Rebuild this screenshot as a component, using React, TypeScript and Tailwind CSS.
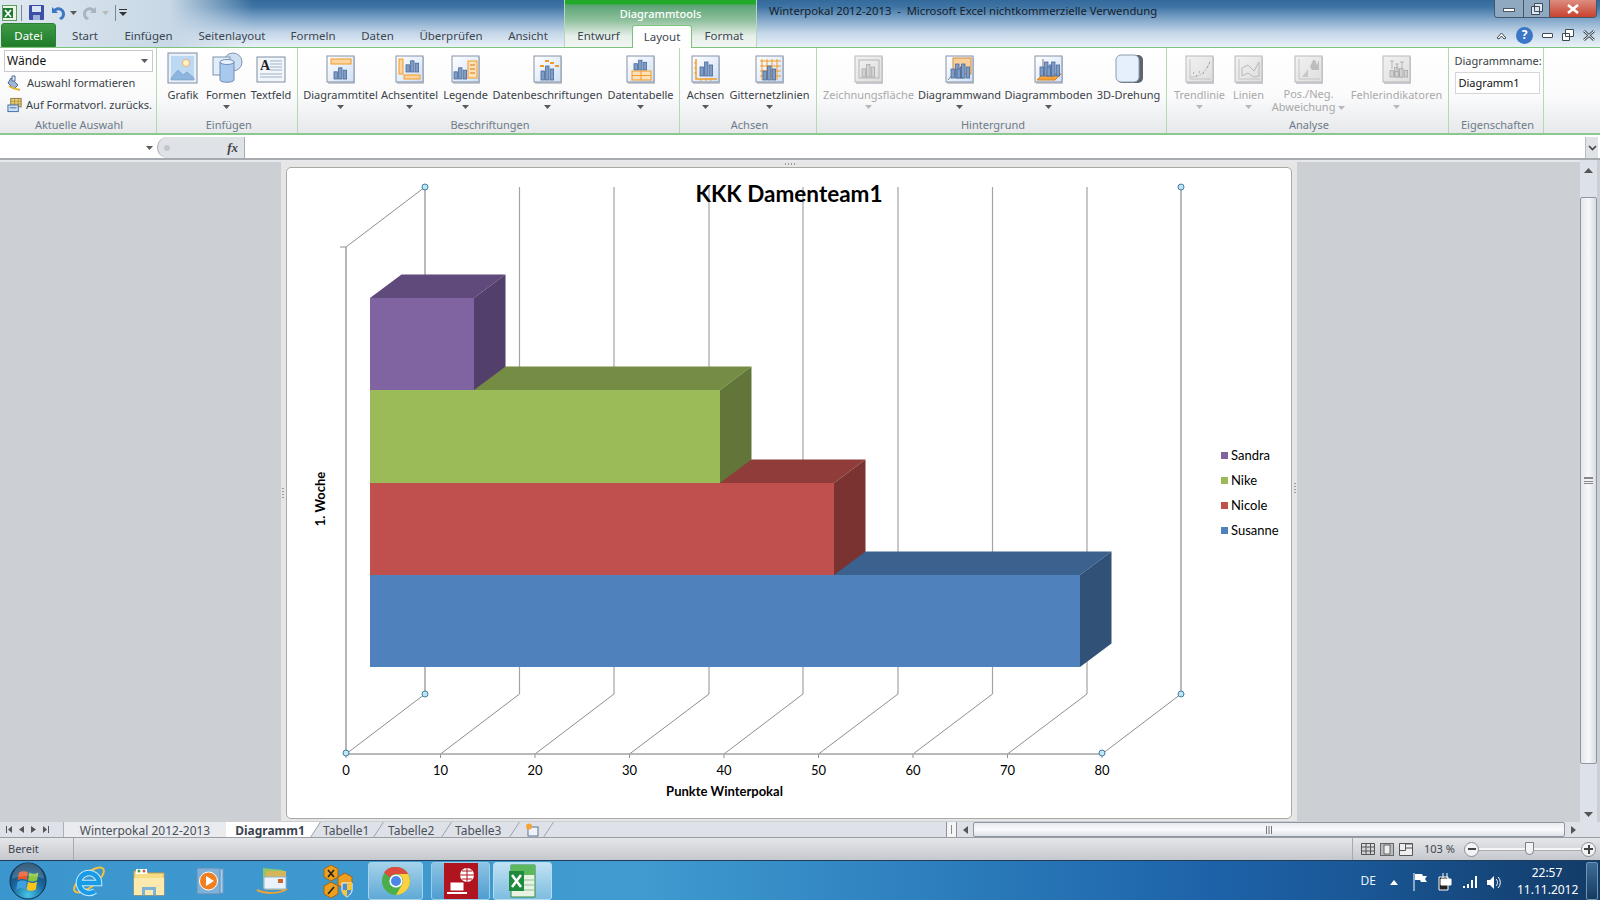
import React from 'react';

const UI = "font-['Noto_Sans','Open_Sans',sans-serif]";

const Arrow = ({ gray }: { gray?: boolean }) => (
  <svg width="7" height="4" viewBox="0 0 7 4"><path d="M0 0h7L3.5 4z" fill={gray ? '#b8b8b8' : '#5a5a5a'} /></svg>
);

const Frame = ({ gray, children }: { gray?: boolean; children?: React.ReactNode }) => (
  <svg width="30" height="29" viewBox="0 0 30 29">
    <rect x="2" y="2" width="27" height="27" fill="#c8ccd2" />
    <rect x="1" y="1" width="27" height="26" fill={gray ? 'url(#grayBox)' : 'url(#blueBox)'} stroke={gray ? '#b9b9b9' : '#8592a5'} />
    {children}
  </svg>
);

const Bars = ({ x = 8, y = 24, gray, s = 1 }: { x?: number; y?: number; gray?: boolean; s?: number }) => {
  const fill = gray ? '#d2d2d2' : '#7d9cc8';
  const stroke = gray ? '#a9a9a9' : '#4c6a96';
  return (
    <g fill={fill} stroke={stroke} strokeWidth="0.8">
      <rect x={x} y={y - 9 * s} width="3.4" height={9 * s} />
      <rect x={x + 4.6} y={y - 14 * s} width="3.4" height={14 * s} />
      <rect x={x + 9.2} y={y - 11 * s} width="3.4" height={11 * s} />
    </g>
  );
};

const OR = '#f39a26';

const Icons: Record<string, React.ReactNode> = {
  grafik: (
    <svg width="32" height="32" viewBox="0 0 32 32">
      <rect x="1" y="1" width="29" height="30" fill="#e9f0f8" stroke="#7f8ea3" />
      <rect x="4" y="4" width="23" height="24" fill="#bcd8f3" />
      <circle cx="19" cy="11" r="3.5" fill="#fff3c9" stroke="#f3b069" />
      <path d="M4 26l7-8 5 5 4-3 7 6v2H4z" fill="#8db5de" stroke="#6f97c3" strokeWidth=".6" />
    </svg>
  ),
  formen: (
    <svg width="32" height="32" viewBox="0 0 32 32" className="ml-[3px]">
      <circle cx="21" cy="10" r="9" fill="#cfdff3" stroke="#7f93ad" />
      <rect x="1" y="5" width="17" height="18" fill="#e4eefa" stroke="#7f93ad" />
      <path d="M8 10v18c0 3 14 3 14 0V10z" fill="#a9c8ee" stroke="#6d8db5" />
      <ellipse cx="15" cy="10" rx="7" ry="2.5" fill="#e8f2fd" stroke="#6d8db5" />
    </svg>
  ),
  text: (
    <svg width="30" height="29" viewBox="0 0 30 29">
      <rect x="1" y="2" width="28" height="25" fill="#f2f5fa" stroke="#7f8ea3" />
      <text x="4" y="15" fontSize="14" fontWeight="700" fontFamily="Liberation Serif, serif" fill="#222">A</text>
      <g stroke="#9fb1c8"><path d="M14 6h12M14 9h12M14 12h12M14 15h12M4 19h22M4 22h22" /></g>
    </svg>
  ),
  titel: <Frame><rect x="5" y="4" width="20" height="5" fill="#fbd6a0" stroke={OR} /><Bars x={8} y={24} s={0.8} /></Frame>,
  achsentitel: <Frame><rect x="4" y="4" width="4" height="15" fill="#fbd6a0" stroke={OR} /><rect x="9" y="20" width="16" height="4" fill="#fbd6a0" stroke={OR} /><Bars x={11} y={17} s={0.8} /></Frame>,
  legende: <Frame><Bars x={3} y={24} s={0.8} /><rect x="17" y="6" width="9" height="17" fill="#fde2b8" stroke={OR} /><path d="M19 10h5M19 14h5M19 18h5" stroke="#d9731a" /></Frame>,
  daten: <Frame><Bars x={8} y={25} /><path d="M7 11h4M12 6h4M17 8h4M22 11h4" stroke={OR} strokeWidth="2" /></Frame>,
  tabelle: <Frame><Bars x={8} y={15} s={0.7} /><rect x="6" y="16" width="19" height="9" fill="#fde2b8" stroke={OR} /><path d="M6 20.5h19M15 16v9" stroke={OR} /></Frame>,
  achsen: <Frame><Bars x={9} y={21} /><path d="M5 4v20h21" fill="none" stroke={OR} strokeWidth="1.5" /><path d="M3 8h2M3 13h2M3 18h2M10 24v2M15 24v2M20 24v2" stroke={OR} /></Frame>,
  gitter: <Frame><path d="M5 6h21M5 11h21M5 16h21M5 21h21M7 4v21M12 4v21M17 4v21M22 4v21" stroke={OR} /><Bars x={8} y={25} /></Frame>,
  flaeche: <Frame gray><rect x="5" y="5" width="20" height="18" fill="none" stroke="#b5b5b5" /><Bars x={8} y={22} gray s={0.9} /></Frame>,
  wand: <Frame><rect x="8" y="3" width="18" height="16" fill="#f8d09c" stroke="#d58d3f" /><path d="M8 19l-5 6" stroke="#888" /><Bars x={6} y={23} /><Bars x={12} y={23} /></Frame>,
  boden: <Frame><path d="M3 25l6-6h18l-6 6z" fill="#f5a43c" stroke="#d9801e" /><path d="M9 4v15" stroke="#777" /><Bars x={6} y={21} /><Bars x={13} y={21} /></Frame>,
  drehung: (
    <svg width="30" height="30" viewBox="0 0 30 30">
      <rect x="3" y="1" width="26" height="28" rx="5" fill="#5b6470" />
      <rect x="2" y="1" width="23" height="27" rx="5" fill="#e6effc" stroke="#8d9cb0" />
    </svg>
  ),
  trend: <Frame gray><path d="M5 4v20h21" fill="none" stroke="#c4c4c4" /><path d="M5 22c10 0 16-4 20-16" fill="none" stroke="#c8c8c8" /><path d="M8 18h1M11 21h1M14 17h1M18 18h1M22 12h1M24 8h1" stroke="#888" /></Frame>,
  linien: <Frame gray><path d="M5 4v20h21" fill="none" stroke="#c4c4c4" /><path d="M8 13l6-3 6 6 5-9v14l-5 1-6-4-6 3z" fill="none" stroke="#b8b8b8" /></Frame>,
  posneg: <Frame gray><path d="M5 4v20h21" fill="none" stroke="#c4c4c4" /><path d="M8 22l6-8v8z" fill="#c8c8c8" /><path d="M16 12l3-7h2l2 5 2-5v10h-7z" fill="#bdbdbd" /></Frame>,
  fehler: <Frame gray><Bars x={8} y={22} gray s={0.7} /><Bars x={13} y={22} gray s={0.6} /><path d="M10 6v8M8 6h4M15 9v6M13 9h4M20 7v8M18 7h4" stroke="#b4b4b4" /></Frame>,
};

type Btn = { w: number; label: string; icon: string; arrow?: boolean; off?: boolean };

const RibbonButton = ({ w, label, icon, arrow, off }: Btn) => (
  <div className="flex shrink-0 flex-col items-center" style={{ width: w }}>
    <div className="flex h-[33px] items-end justify-center">{Icons[icon]}</div>
    <div className={`mt-[3px] whitespace-nowrap text-[11px] leading-[15px] ${off ? 'text-[#a9a9a9]' : 'text-[#3a3f46]'}`}>{label}</div>
    {arrow && <div className="mt-[3px] flex h-[4px] items-center"><Arrow gray={off} /></div>}
  </div>
);

const Group = ({ w, pl, label, children }: { w: number; pl?: number; label: string; children: React.ReactNode }) => (
  <div className="flex h-full shrink-0 flex-col border-r border-[#b3d8b3]" style={{ width: w }}>
    <div className="flex h-[69px] pt-[3px]" style={{ paddingLeft: pl }}>{children}</div>
    <div className="pl-[4px] text-center text-[11px] leading-[15px] text-[#6f7b88]">{label}</div>
  </div>
);

const Tab = ({ w, label }: { w: number; label: string }) => (
  <div className="flex h-full shrink-0 items-center justify-center text-[11.5px] text-[#3d4650]" style={{ width: w }}>{label}</div>
);

const Slant = ({ white }: { white?: boolean }) => (
  <svg width="11" height="16" viewBox="0 0 11 16" className="shrink-0">
    {white && <path d="M0 0h10L0 16z" fill="#fff" />}
    <path d="M0 16L10.500 0" stroke="#9ea3aa" fill="none" />
  </svg>
);

const Grip = () => <div className="h-[2px] w-[10px] bg-[linear-gradient(90deg,#9a9a9a_1px,transparent_1px,transparent_2px)] bg-[length:3px_2px]" />;

const Chart = () => {
  const back = [425, 519.5, 614, 709, 803, 898, 992.5, 1087, 1181];
  const front = [346, 440.5, 535, 629.5, 724, 818.5, 913, 1007.5, 1102];
  const labels = [0, 10, 20, 30, 40, 50, 60, 70, 80];
  const series = [
    { name: 'Sandra', y: 298, h: 92, right: 474, c: '#8064a2', top: '#604a7b', side: '#533f6b' },
    { name: 'Nike', y: 390, h: 93, right: 720, c: '#9bbb59', top: '#748c43', side: '#62763a' },
    { name: 'Nicole', y: 483, h: 92, right: 834, c: '#c0504d', top: '#903c3a', side: '#7b3331' },
    { name: 'Susanne', y: 575, h: 92, right: 1080, c: '#4f81bd', top: '#3b618e', side: '#325177' },
  ];
  const handles = [[425, 187], [1181, 187], [425, 694], [1181, 694], [346, 753], [1102, 753]];
  return (
    <svg viewBox="287 168 1005 650" width="1005" height="650" className="block font-['Lato',sans-serif]">
      {back.map((x, i) => (
        <g key={x}>
          <path d={`M${x} 187V694`} stroke="#a3a3a3" strokeWidth={i === 0 || i === 8 ? 1.5 : 1.2} fill="none" />
          <path d={`M${x} 694L${front[i]} 754`} stroke="#8f8f8f" fill="none" />
          <path d={`M${front[i]} 754v4`} stroke="#8f8f8f" />
          <text x={front[i]} y="775" textAnchor="middle" fontSize="13" fill="#000">{labels[i]}</text>
        </g>
      ))}
      <path d="M346 247L425 187M340 247H346" stroke="#8f8f8f" fill="none" />
      <path d="M346 247V754H1102" stroke="#a3a3a3" strokeWidth="1.6" fill="none" />
      {[...series].reverse().map((s) => (
        <g key={s.name}>
          <path d={`M370 ${s.y}l31.5 -23.5H${s.right + 31.5}L${s.right} ${s.y}z`} fill={s.top} />
          <path d={`M${s.right} ${s.y}l31.5 -23.5v${s.h}L${s.right} ${s.y + s.h}z`} fill={s.side} />
          <rect x="370" y={s.y} width={s.right - 370} height={s.h} fill={s.c} />
        </g>
      ))}
      {handles.map(([x, y]) => (
        <circle key={`${x}-${y}`} cx={x} cy={y} r="3" fill="#bfe5f3" stroke="#3f7fa6" />
      ))}
      <text x="789" y="202" textAnchor="middle" fontSize="22.5" fontWeight="700" fill="#000">KKK Damenteam1</text>
      <text x="724.5" y="796" textAnchor="middle" fontSize="13" fontWeight="700" fill="#000">Punkte Winterpokal</text>
      <text transform="translate(325 499) rotate(-90)" textAnchor="middle" fontSize="13" fontWeight="700" fill="#000">1. Woche</text>
      {series.map((s, i) => (
        <g key={s.name}>
          <rect x="1221" y={452 + i * 25} width="7" height="7" fill={s.c} />
          <text x="1231" y={460 + i * 25} fontSize="13" fill="#000">{s.name}</text>
        </g>
      ))}
    </svg>
  );
};

const Chrome = () => (
  <svg width="30" height="30" viewBox="0 0 30 30">
    <circle cx="15" cy="15" r="14" fill="#4aae4c" />
    <path d="M15 1a14 14 0 0 1 12.1 7H15a7 7 0 0 0-6.1 3.5L3 6.3A14 14 0 0 1 15 1z" fill="#dd4b3e" />
    <path d="M27.1 8A14 14 0 0 1 15 29l6.1-10.5A7 7 0 0 0 15 8z" fill="#fcd13f" />
    <circle cx="15" cy="15" r="6.6" fill="#fff" />
    <circle cx="15" cy="15" r="5" fill="#4a85e8" />
  </svg>
);

const Taskbar = () => (
  <div className="flex h-[40px] shrink-0 items-center border-t border-[#1e3d5c] bg-[linear-gradient(90deg,#3a96cc_0%,#3f9bd0_40%,#2b7cbb_60%,#1d62a8_76%,#1a5796_85%,#123a66_100%)]">
    <div className="ml-[9px] flex h-[36px] w-[38px] shrink-0 items-center justify-center">
      <svg width="38" height="38" viewBox="0 0 38 38">
        <defs>
          <radialGradient id="orb" cx="0.5" cy="0.9" r="0.9">
            <stop offset="0" stopColor="#47c6e6" />
            <stop offset="0.5" stopColor="#1a6aa0" />
            <stop offset="1" stopColor="#12385c" />
          </radialGradient>
        </defs>
        <circle cx="19" cy="19" r="18" fill="url(#orb)" stroke="#0d2f4d" />
        <g transform="translate(19 19) scale(1.300) translate(-18 -18.500)">
          <path d="M11 12c3-1.500 5-1 7 0l-1 6c-2-1-4-1.500-7 0z" fill="#e8562a" />
          <path d="M19 12c2 1 4 1.500 7 0l-1 6c-3 1.500-5 1-7 0z" fill="#8cc63f" />
          <path d="M10 19c3-1.500 5-1 7 0l-1 6c-2-1-4-1.500-7 0z" fill="#3f9fe0" />
          <path d="M18 19c2 1 4 1.500 7 0l-1 6c-3 1.500-5 1-7 0z" fill="#fcc419" />
        </g>
        <path d="M3 17a16 16 0 0 1 32 0c-8-4-24-4-32 0z" fill="#fff" opacity=".18" />
      </svg>
    </div>
    <div className="ml-[24px] flex w-[36px] shrink-0 justify-center">
      <svg width="34" height="36" viewBox="0 0 34 36">
        <ellipse cx="17" cy="17" rx="18" ry="7" transform="rotate(-38 17 17)" fill="none" stroke="#f6c13a" strokeWidth="2" />
        <path d="M8 20h19a10 10 0 1 0-4 8" fill="none" stroke="#c5ecfb" strokeWidth="6.500" />
        <path d="M8 20h19a10 10 0 1 0-4 8" fill="none" stroke="#1b9be6" strokeWidth="4.500" />
      </svg>
    </div>
    <div className="ml-[24px] flex w-[36px] shrink-0 justify-center">
      <svg width="32" height="30" viewBox="0 0 32 30">
        <path d="M1 5h12l2 2h16v22H1z" fill="#f6dc85" stroke="#c7a14c" />
        <path d="M3 3h11v5H3z" fill="#fff" />
        <circle cx="6" cy="5" r="1.500" fill="#3fa34d" />
        <circle cx="11" cy="5" r="1.500" fill="#d9534f" />
        <path d="M1 12h30v17H1z" fill="#fbe9ad" />
        <path d="M9 29v-8h14v8h-3v-5h-8v5z" fill="#7fb2d9" />
      </svg>
    </div>
    <div className="ml-[25px] flex w-[36px] shrink-0 justify-center">
      <svg width="28" height="28" viewBox="0 0 28 28">
        <rect x="4" y="2" width="23" height="24" fill="#a9cbe6" stroke="#6f9dc4" />
        <rect x="1" y="1" width="23" height="26" fill="#7fb0d8" stroke="#5f8fb8" />
        <circle cx="12.500" cy="14" r="9" fill="#f0801f" stroke="#fff" />
        <path d="M10 9l8 5-8 5z" fill="#fff" />
      </svg>
    </div>
    <div className="ml-[27px] flex w-[36px] shrink-0 justify-center">
      <svg width="34" height="30" viewBox="0 0 34 30">
        <path d="M7 2l20 2v20L7 22z" fill="#8cc76a" />
        <path d="M10 5h20v19H10z" fill="#d6b45a" />
        <rect x="8" y="11" width="22" height="12" fill="#eaf3fb" stroke="#8fb4d4" />
        <rect x="22" y="13" width="5" height="4" fill="#c9652e" />
        <path d="M1 24c8 4 22 4 30-1" fill="none" stroke="#e8a33a" strokeWidth="2" />
      </svg>
    </div>
    <div className="ml-[29px] flex w-[36px] shrink-0 justify-center">
      <svg width="32" height="34" viewBox="0 0 32 34">
        <g fill="#eda01f" stroke="#a8660c">
          <path d="M9 1l7 4v8l-7 4-7-4V5z" />
          <path d="M23 9l7 4v8l-7 4-7-4v-8z" />
          <path d="M9 18l7 4v8l-7 4-7-4v-8z" />
        </g>
        <path d="M6 6l6 7M12 6l-6 7M6 30l6-7" stroke="#222" strokeWidth="1.600" />
        <path d="M20 19h10v7c0 4-5 7-5 7s-5-3-5-7z" fill="#4a8fd6" stroke="#fff" />
        <path d="M25 19h5v7h-5zM20 26h5v7c-2-1-5-3-5-7z" fill="#f4c63a" />
      </svg>
    </div>
    <div className="ml-[12px] flex h-[38px] w-[55px] shrink-0 items-center justify-center rounded-[3px] border border-[#a7d3ea] bg-[linear-gradient(180deg,#a5d2ea,#5fa9d6)]"><Chrome /></div>
    <div className="ml-[8px] flex h-[38px] w-[59px] shrink-0 items-center justify-center rounded-[3px] border border-[#9fcfe8] bg-[linear-gradient(180deg,#8cc4e4,#4f9dd0)]">
      <svg width="34" height="36" viewBox="0 0 34 36">
        <rect width="34" height="36" fill="#b0141e" />
        <circle cx="23" cy="12" r="7" fill="#fff" />
        <path d="M23 5v14M16 12h14M18 8h10M18 16h10" stroke="#b0141e" />
        <rect x="6" y="19" width="14" height="9" fill="#fff" stroke="#b0141e" />
        <path d="M3 30h20" stroke="#fff" strokeWidth="2" />
      </svg>
    </div>
    <div className="ml-[3px] flex h-[38px] w-[59px] shrink-0 items-center justify-center rounded-[3px] border border-[#b5dcf0] bg-[linear-gradient(180deg,#c0e2f3,#7dbde0)]">
      <svg width="32" height="34" viewBox="0 0 32 34">
        <path d="M4 1h24v32H4z" fill="#e8f3e4" stroke="#2f8a3f" />
        <path d="M4 1h24v10H4z" fill="#5cb85c" />
        <path d="M16 16h12M16 21h12M16 26h12" stroke="#8fbf8f" />
        <path d="M2 7h15v20H2z" fill="#1e8a3e" />
        <path d="M5 11l9 12M14 11l-9 12" stroke="#fff" strokeWidth="2.500" />
      </svg>
    </div>
    <div className="flex-1" />
    <div className="mr-[14px] text-[12px] text-[#e9f2f9]">DE</div>
    <svg width="8" height="5" viewBox="0 0 8 5" className="mr-[15px] mt-[3px]"><path d="M4 0l4 5H0z" fill="#fff" /></svg>
    <svg width="15" height="18" viewBox="0 0 15 18" className="mr-[9px] mt-[3px]"><path d="M1 0v18" stroke="#fff" /><path d="M2 1h7l1 2h4l-2 3 2 3H8l-1-2H2z" fill="#fff" /></svg>
    <svg width="15" height="18" viewBox="0 0 15 18" className="mr-[10px] mt-[3px]"><path d="M2 4h9v13H2z" fill="#222" stroke="#fff" /><path d="M6 0v5M10 0v5M4 6h10v6H4z" fill="#fff" stroke="#fff" /></svg>
    <svg width="16" height="14" viewBox="0 0 16 14" className="mr-[8px] mt-[3px]"><path d="M1 11h2v2H1zM5 9h2v4H5zM9 5h2v8H9zM13 1h2v12h-2z" fill="#fff" /></svg>
    <svg width="15" height="15" viewBox="0 0 15 15" className="mr-[16px] mt-[3px]"><path d="M1 5h3l4-4v13l-4-4H1z" fill="#fff" /><path d="M10 4c2 2 2 5 0 7M12 2c3 3 3 8 0 11" stroke="#fff" fill="none" /></svg>
    <div className="w-[60px] text-center text-[12px] leading-[17px] text-white">
      <div>22:57</div>
      <div>11.11.2012</div>
    </div>
    <div className="ml-[9px] mr-[2px] h-[38px] w-[12px] rounded-[2px] border border-[#6f93b3] bg-[linear-gradient(180deg,#3e6d99,#16395f)]" />
  </div>
);

export default function App() {
  return (
    <div className={`${UI} relative flex h-[900px] w-[1600px] flex-col overflow-hidden bg-[#ccd0d5]`}>
      <svg className="absolute h-0 w-0">
        <defs>
          <linearGradient id="blueBox" x1="0" y1="0" x2="1" y2="1"><stop offset="0" stopColor="#ffffff" /><stop offset="1" stopColor="#cfe0f7" /></linearGradient>
          <linearGradient id="grayBox" x1="0" y1="0" x2="1" y2="1"><stop offset="0" stopColor="#f2f2f2" /><stop offset="1" stopColor="#dedede" /></linearGradient>
        </defs>
      </svg>

      {/* title bar with tabs */}
      <div className="flex h-[47px] shrink-0 bg-[linear-gradient(180deg,#336a9b_0%,#3f75a5_15%,#7ea4c8_40%,#c3d6e8_70%,#eaf1f8_100%)]">
        <div className="flex w-[564px] shrink-0 flex-col bg-[linear-gradient(90deg,#dfe8f0_0%,#c8d8e6_30%,rgba(200,216,230,0)_45%)]">
          <div className="flex h-[25px] items-center pl-[2px]">
            <svg width="15" height="16" viewBox="0 0 15 16"><rect x=".5" y=".5" width="14" height="15" fill="#eaf5e6" stroke="#5d9c5d" /><path d="M1 3h10v10H1z" fill="#1e7a34" /><path d="M3 5l6 7M9 5l-6 7" stroke="#fff" strokeWidth="1.800" /></svg>
            <div className="ml-[4px] mr-[7px] h-[16px] w-px bg-[#7c8794]" />
            <svg width="15" height="15" viewBox="0 0 15 15"><rect width="15" height="15" rx="1" fill="#3a4fa8" /><rect x="3" y="1" width="9" height="6" fill="#dde6f5" /><rect x="4" y="10" width="7" height="5" fill="#9fb0d8" /></svg>
            <svg width="15" height="15" viewBox="0 0 15 15" className="ml-[7px]"><path d="M1 2v6h6L5 6c3-2 6 0 6 3 0 2-1 3-3 4l2 2c3-1 4-4 4-6C14 4 8 0 3 4z" fill="#3c77c4" /></svg>
            <span className="ml-[4px]"><Arrow /></span>
            <svg width="15" height="15" viewBox="0 0 15 15" className="ml-[5px]"><path d="M14 2v6H8l2-2C7 4 4 6 4 9c0 2 1 3 3 4l-2 2C2 14 1 11 1 9 1 4 7 0 12 4z" fill="#a9b4bf" /></svg>
            <span className="ml-[5px]"><Arrow gray /></span>
            <div className="ml-[6px] mr-[3px] h-[16px] w-px bg-[#7c8794]" />
            <svg width="8" height="7" viewBox="0 0 8 7"><path d="M0 0h8v1H0zM0 3h8L4 7z" fill="#333" /></svg>
          </div>
          <div className="flex h-[22px] items-stretch pl-[1px]">
            <div className="-mt-[2px] flex h-[24px] w-[55px] shrink-0 items-center justify-center rounded-t-[3px] border border-[#2f7f35] bg-[linear-gradient(180deg,#3f9a45,#1f7d2a)] pt-[1px] text-[11.5px] text-white">Datei</div>
            <Tab w={58} label="Start" />
            <Tab w={69} label="Einfügen" />
            <Tab w={98} label="Seitenlayout" />
            <Tab w={64} label="Formeln" />
            <Tab w={65} label="Daten" />
            <Tab w={82} label="Überprüfen" />
            <Tab w={72} label="Ansicht" />
          </div>
        </div>
        <div className="flex w-[193px] shrink-0 flex-col border-x border-[#b9d4bf] bg-[linear-gradient(180deg,#22a92a_0px,#22a92a_4px,#5aa475_5px,#8dbf9b_20px,#e6efe9_36px,#f1f5f3_47px)]">
          <div className="flex h-[25px] items-center justify-center pt-[3px] text-[11px] font-medium text-white">Diagrammtools</div>
          <div className="flex h-[22px]">
            <Tab w={67} label="Entwurf" />
            <div className="relative z-10 flex h-[23px] w-[60px] shrink-0 items-center justify-center rounded-t-[3px] border border-b-0 border-[#7ac47a] bg-white pb-[1px] text-[11.5px] text-[#3d4650]">Layout</div>
            <Tab w={64} label="Format" />
          </div>
        </div>
        <div className="flex min-w-0 flex-1 flex-col">
          <div className="flex h-[25px] items-start">
            <div className="ml-[12px] mt-[3px] whitespace-nowrap text-[11.25px] text-[#16202b]">Winterpokal 2012-2013&nbsp; -&nbsp; Microsoft Excel nichtkommerzielle Verwendung</div>
            <div className="ml-auto mr-[3px] flex h-[18px] w-[103px] overflow-hidden rounded-b-[4px] border border-t-0 border-[#44586c]">
              <div className="flex w-[29px] items-center justify-center border-r border-[#44586c] bg-[#8fa9c0]"><div className="mt-[3px] h-[4px] w-[12px] border border-[#49596a] bg-white" /></div>
              <div className="flex w-[26px] items-center justify-center border-r border-[#44586c] bg-[#8fa9c0]">
                <svg width="12" height="12" viewBox="0 0 12 12"><path d="M3.500 .5h8v8h-8zM.5 3.500h8v8h-8z" fill="#dfe8f0" stroke="#3d4c5c" /></svg>
              </div>
              <div className="flex flex-1 items-center justify-center bg-[linear-gradient(180deg,#dc8d80,#c8412e)]">
                <svg width="14" height="10" viewBox="0 0 14 10"><path d="M2 1l10 8M12 1L2 9" stroke="#fff" strokeWidth="2.600" /></svg>
              </div>
            </div>
          </div>
          <div className="flex h-[20px] items-center justify-end gap-[9px] pr-[5px]">
            <svg width="11" height="9" viewBox="0 0 11 9"><path d="M1 7l4.500-5L10 7l-2 1-2.500-3L3 8z" fill="#fff" stroke="#3f4a55" /></svg>
            <div className="flex h-[17px] w-[17px] items-center justify-center rounded-full bg-[#3b77c6] text-[12px] font-bold text-white">?</div>
            <div className="h-[5px] w-[11px] rounded-[1px] border border-[#3f4a55] bg-white" />
            <svg width="12" height="12" viewBox="0 0 12 12"><path d="M3.500 .5h8v7h-8zM.5 4.500h7v7h-7z" fill="#fff" stroke="#3f4a55" /></svg>
            <svg width="12" height="11" viewBox="0 0 12 11"><path d="M1 1l10 9M11 1L1 10" stroke="#3f4a55" strokeWidth="2.600" /><path d="M1 1l10 9M11 1L1 10" stroke="#fff" strokeWidth="1" /></svg>
          </div>
        </div>
      </div>

      {/* ribbon */}
      <div className="flex h-[88px] shrink-0 border-y-2 border-t border-[#7cc47c] border-b-[#8cc88c] bg-[linear-gradient(180deg,#ffffff_0%,#fbfbfc_55%,#e6e8eb_100%)]">
        <div className="flex h-full w-[157px] shrink-0 flex-col border-r border-[#b3d8b3]">
          <div className="h-[69px] px-[4px] pt-[2px]">
            <div className="flex h-[22px] w-[149px] items-center justify-between border border-[#c6cad0] bg-white pl-[2px] pr-[4px] text-[12px] text-[#111]">
              Wände
              <Arrow />
            </div>
            <div className="mt-[1px] flex h-[20px] items-center gap-[4px] whitespace-nowrap pl-[3px] text-[11px] text-[#3a3f46]">
              <svg width="16" height="16" viewBox="0 0 16 16"><path d="M4 3l7 7-4 4-6-6z" fill="#9fb4d6" stroke="#4f6b96" /><path d="M5 1h3v5H5z" fill="#e8edf5" stroke="#4f6b96" /><path d="M2 11c3 2 6 3 11 4" stroke="#e5b22b" strokeWidth="2" fill="none" /></svg>
              Auswahl formatieren
            </div>
            <div className="mt-[2px] flex h-[20px] items-center gap-[4px] whitespace-nowrap pl-[3px] text-[11px] text-[#3a3f46]">
              <svg width="16" height="16" viewBox="0 0 16 16"><rect x="4" y="1" width="11" height="9" fill="#f2cf6e" stroke="#8a7a4a" /><path d="M4 4h11M4 7h11M8 1v9M12 1v9" stroke="#8a7a4a" strokeWidth=".6" /><rect x="1" y="8" width="11" height="7" fill="#cfe0f5" stroke="#3f6ca8" /><path d="M3 11h7" stroke="#3f6ca8" /></svg>
              Auf Formatvorl. zurücks.
            </div>
          </div>
          <div className="pl-[2px] text-center text-[11px] leading-[15px] text-[#6f7b88]">Aktuelle Auswahl</div>
        </div>
        <Group w={140.500} pl={6} label="Einfügen">
          <RibbonButton w={40} label="Grafik" icon="grafik" />
          <RibbonButton w={46} label="Formen" icon="formen" arrow />
          <RibbonButton w={44} label="Textfeld" icon="text" />
        </Group>
        <Group w={382} pl={7} label="Beschriftungen">
          <RibbonButton w={72} label="Diagrammtitel" icon="titel" arrow />
          <RibbonButton w={66} label="Achsentitel" icon="achsentitel" arrow />
          <RibbonButton w={46} label="Legende" icon="legende" arrow />
          <RibbonButton w={118} label="Datenbeschriftungen" icon="daten" arrow />
          <RibbonButton w={68} label="Datentabelle" icon="tabelle" arrow />
        </Group>
        <Group w={137} pl={5} label="Achsen">
          <RibbonButton w={42} label="Achsen" icon="achsen" arrow />
          <RibbonButton w={86} label="Gitternetzlinien" icon="gitter" arrow />
        </Group>
        <Group w={350} pl={3} label="Hintergrund">
          <RibbonButton w={98} label="Zeichnungsfläche" icon="flaeche" arrow off />
          <RibbonButton w={84} label="Diagrammwand" icon="wand" arrow />
          <RibbonButton w={94} label="Diagrammboden" icon="boden" arrow />
          <RibbonButton w={66} label="3D-Drehung" icon="drehung" />
        </Group>
        <Group w={282} pl={5} label="Analyse">
          <RibbonButton w={56} label="Trendlinie" icon="trend" arrow off />
          <RibbonButton w={42} label="Linien" icon="linien" arrow off />
          <div className="flex w-[78px] shrink-0 flex-col items-center">
            <div className="flex h-[33px] items-end justify-center">{Icons.posneg}</div>
            <div className="mt-[3px] whitespace-nowrap text-center text-[11px] leading-[13px] text-[#a9a9a9]">
              Pos./Neg.<br />Abweichung <span className="inline-block align-middle"><Arrow gray /></span>
            </div>
          </div>
          <RibbonButton w={98} label="Fehlerindikatoren" icon="fehler" arrow off />
        </Group>
        <div className="flex h-full w-[95px] shrink-0 flex-col border-r border-[#b3d8b3]">
          <div className="h-[69px] pl-[6px] pt-[5px]">
            <div className="whitespace-nowrap text-[11px] leading-[15px] text-[#3a3f46]">Diagrammname:</div>
            <div className="mt-[4px] flex h-[22px] w-[85px] items-center border border-[#d3d6da] bg-white pl-[3px] text-[11px] text-[#111]">Diagramm1</div>
          </div>
          <div className="pl-[4px] text-center text-[11px] leading-[15px] text-[#6f7b88]">Eigenschaften</div>
        </div>
      </div>

      {/* formula bar */}
      <div className="flex h-[25px] shrink-0 items-stretch border-b-2 border-[#a7abb0] bg-white pt-[2px]">
        <div className="flex w-[157px] shrink-0 items-center justify-end pr-[4px]"><Arrow /></div>
        <div className="flex w-[88px] shrink-0 items-center justify-between rounded-l-[12px] border border-y-0 border-[#a7abb0] bg-[#dfe2e6] px-[6px]">
          <div className="h-[6px] w-[6px] rounded-full bg-[#c4c8cd]" />
          <span className="font-['Liberation_Serif',serif] text-[13px] font-bold italic text-[#444]">fx</span>
        </div>
        <div className="flex-1" />
        <div className="mr-[2px] flex w-[13px] items-center justify-center border-l border-[#b9bdc2] bg-[#dfe2e6]">
          <svg width="9" height="6" viewBox="0 0 9 6"><path d="M1 1l3.500 3.500L8 1" fill="none" stroke="#444" strokeWidth="1.600" /></svg>
        </div>
      </div>

      {/* sheet area */}
      <div className="flex min-h-0 flex-1">
        <div className="flex min-w-0 flex-1 flex-col">
          <div className="flex h-[2px] shrink-0 bg-[#e6e8eb]" />
          <div className="flex min-h-0 flex-1 pl-[281px]">
            <div className="relative h-[659px] w-[1016px] border-[5px] border-b-[4px] border-[#e6e6e6] bg-[#e6e6e6]">
              <div className="overflow-hidden rounded-[5px] border border-[#a9a9a9] bg-white"><Chart /></div>
              <div className="absolute -top-[4px] left-[499px]"><Grip /></div>
              <div className="absolute -left-[8px] top-[325px] rotate-90"><Grip /></div>
              <div className="absolute -right-[8px] top-[320px] rotate-90"><Grip /></div>
            </div>
          </div>
        </div>
        <div className="mr-[3px] flex w-[17px] shrink-0 flex-col items-center bg-[#dde1e9]">
          <div className="flex h-[37px] w-full items-center justify-center pb-[16px]">
            <svg width="9" height="5" viewBox="0 0 9 5"><path d="M4.500 0L9 5H0z" fill="#555" /></svg>
          </div>
          <div className="flex h-[567px] w-full items-center justify-center rounded-[2px] border border-[#8f96a0] bg-[linear-gradient(90deg,#e3e6ec,#f7f8fa_50%,#d8dce4)]">
            <div className="h-[7px] w-[9px] border-y border-[#888] bg-[linear-gradient(180deg,#888_1px,transparent_1px,transparent_3px,#888_3px,#888_4px,transparent_4px)]" />
          </div>
          <div className="flex flex-1 items-end justify-center pb-[5px]">
            <svg width="9" height="5" viewBox="0 0 9 5"><path d="M0 0h9L4.500 5z" fill="#555" /></svg>
          </div>
        </div>
      </div>

      {/* sheet tabs */}
      <div className="flex h-[16px] shrink-0 items-stretch border-b border-[#9a9ea4] bg-[#dee2e8] text-[12px] leading-[17px] text-[#4a5058]">
        <div className="flex w-[63px] shrink-0 items-center gap-[7px] pl-[6px]">
          <svg width="6" height="7" viewBox="0 0 6 7"><path d="M0 0h1v7H0zM6 0v7L2 3.500z" fill="#555" /></svg>
          <svg width="5" height="7" viewBox="0 0 5 7"><path d="M5 0v7L0 3.500z" fill="#555" /></svg>
          <svg width="5" height="7" viewBox="0 0 5 7"><path d="M0 0v7l5-3.500z" fill="#555" /></svg>
          <svg width="6" height="7" viewBox="0 0 6 7"><path d="M5 0h1v7H5zM0 0v7l4-3.500z" fill="#555" /></svg>
        </div>
        <div className="w-[163px] shrink-0 border-l border-[#aab0b8] bg-[#e9ebef] text-center">Winterpokal 2012-2013</div>
        <div className="w-[84px] shrink-0 bg-white pl-[4px] text-center font-bold text-[#3d4650]">Diagramm1</div>
        <Slant white />
        <div className="w-[52px] shrink-0 pl-[2px]">Tabelle1</div>
        <Slant />
        <div className="w-[57px] shrink-0 pl-[4px]">Tabelle2</div>
        <Slant />
        <div className="w-[57px] shrink-0 pl-[3px]">Tabelle3</div>
        <Slant />
        <div className="flex w-[23px] shrink-0 items-center justify-center">
          <svg width="14" height="14" viewBox="0 0 14 14"><rect x="3" y="4" width="10" height="9" fill="#eef3f9" stroke="#5a7290" /><circle cx="4" cy="3.500" r="3" fill="#f2a33a" /></svg>
        </div>
        <Slant />
        <div className="ml-[392px] flex w-[11px] shrink-0 items-center justify-center border-x border-[#8e9298] bg-[#f4f5f7]"><div className="h-[9px] w-px bg-[#888]" /></div>
        <div className="flex w-[16px] shrink-0 items-center justify-center">
          <svg width="5" height="8" viewBox="0 0 5 8"><path d="M5 0v8L0 4z" fill="#555" /></svg>
        </div>
        <div className="flex flex-1 items-center justify-center rounded-[2px] border border-[#8f96a0] bg-[linear-gradient(180deg,#e8ebf0,#f8f9fb_50%,#dfe3e9)]">
          <svg width="7" height="8" viewBox="0 0 7 8"><path d="M.5 0v8M3 0v8M5.500 0v8" stroke="#777" /></svg>
        </div>
        <div className="flex w-[17px] shrink-0 items-center justify-center">
          <svg width="5" height="8" viewBox="0 0 5 8"><path d="M0 0v8l5-4z" fill="#555" /></svg>
        </div>
        <div className="w-[18px] shrink-0" />
      </div>

      {/* status bar */}
      <div className="flex h-[22px] shrink-0 items-center bg-[linear-gradient(180deg,#e4e6e9,#c5c8cd)] text-[11px] text-[#3d4650]">
        <div className="flex h-full w-[74px] shrink-0 items-center border-r border-[#a6a9ae] pl-[8px]">Bereit</div>
        <div className="flex-1" />
        <div className="flex h-full items-center border-l border-[#a6a9ae] pl-[8px]">
          <svg width="14" height="12" viewBox="0 0 14 12"><path d="M.5 .5h13v11H.5zM.5 4h13M.5 8h13M5 .5v11M9.500 .5v11" fill="none" stroke="#555" /></svg>
          <svg width="14" height="13" viewBox="0 0 14 13" className="ml-[5px]"><rect x=".5" y=".5" width="13" height="12" fill="#b9bdc2" stroke="#666" /><rect x="4" y="2" width="6" height="9" fill="#eee" stroke="#666" /></svg>
          <svg width="14" height="13" viewBox="0 0 14 13" className="ml-[5px]"><path d="M.5 .5h13v12H.5z" fill="#eee" stroke="#555" /><path d="M6.500 .5v7h-6M6.500 1h7v4h-7" fill="none" stroke="#555" /></svg>
          <span className="ml-[11px] w-[33px] whitespace-nowrap">103 %</span>
          <div className="ml-[7px] flex h-[15px] w-[15px] items-center justify-center rounded-full border border-[#8a8d92] bg-[#f2f3f5]"><div className="h-[2px] w-[8px] bg-[#444]" /></div>
          <div className="relative h-[2px] w-[102px] bg-[#f6f6f6] shadow-[0_1px_0_#a9acb1]">
            <div className="absolute -top-[6px] left-[46px] h-[13px] w-[9px] rounded-b-[5px] border border-[#7c8085] bg-[#f2f3f5]" />
          </div>
          <div className="relative mr-[4px] flex h-[15px] w-[15px] items-center justify-center rounded-full border border-[#8a8d92] bg-[#f2f3f5]">
            <div className="h-[2px] w-[9px] bg-[#444]" />
            <div className="absolute h-[9px] w-[2px] bg-[#444]" />
          </div>
        </div>
      </div>

      <Taskbar />
    </div>
  );
}
